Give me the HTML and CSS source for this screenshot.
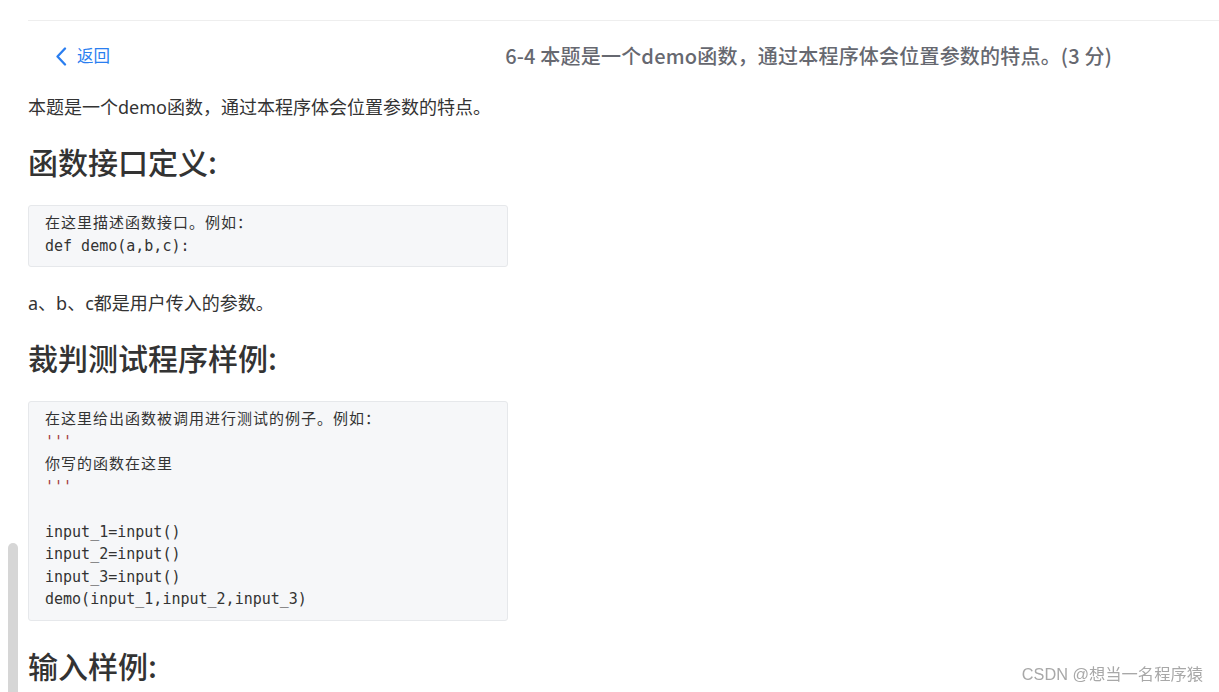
FILE: index.html
```html
<!DOCTYPE html>
<html lang="zh-CN">
<head>
<meta charset="utf-8">
<title>6-4 本题是一个demo函数</title>
<link rel="stylesheet" href="styles.css">
</head>
<body>
<div class="page">
  <div class="content">
    <header class="header">
      <a class="back" href="#">
        <svg class="chev" width="12" height="19" viewBox="0 0 12 19"><polyline points="10,1.5 2.5,9.5 10,17.5" fill="none" stroke="currentColor" stroke-width="2.3" stroke-linecap="round" stroke-linejoin="round"/></svg>
        <span>返回</span>
      </a>
      <h1 class="title">6-4 本题是一个demo函数，通过本程序体会位置参数的特点。(3 分)</h1>
    </header>
    <p class="text first">本题是一个demo函数，通过本程序体会位置参数的特点。</p>
    <h2 class="section">函数接口定义:</h2>
    <pre class="code"><span class="cjk">在这里描述函数接口。例如：</span>
def demo(a,b,c):</pre>
    <p class="text after-code">a、b、c都是用户传入的参数。</p>
    <h2 class="section">裁判测试程序样例:</h2>
    <pre class="code"><span class="cjk">在这里给出函数被调用进行测试的例子。例如：</span>
<span class="str">'''</span>
<span class="cjk">你写的函数在这里</span>
<span class="str">'''</span>

input_1=input()
input_2=input()
input_3=input()
demo(input_1,input_2,input_3)</pre>
    <h2 class="section last">输入样例:</h2>
  </div>
</div>
<div class="scroll-thumb"></div>
<div class="watermark">CSDN @想当一名程序猿</div>
</body>
</html>
```
FILE: styles.css
```css
html, body {
  margin: 0;
  padding: 0;
  background: #fff;
  overflow: hidden;
}
body {
  font-family: "Noto Sans", "Noto Sans CJK SC", sans-serif;
  color: #333;
}
.page {
  padding: 20px 0 0 28px;
}
.content {
  border-top: 1px solid #eeeeee;
}
.header {
  display: flex;
  align-items: center;
  height: 46px;
  margin-top: 12px;
  padding-left: 27px;
}
.back {
  display: flex;
  align-items: center;
  gap: 10px;
  color: #2a7ef0;
  text-decoration: none;
  font-size: 16.5px;
  line-height: 22px;
}
.chev {
  display: block;
}
.title {
  margin: 0 107px 0 auto;
  font-family: "Noto Sans CJK SC", sans-serif;
  font-size: 20px;
  font-weight: 500;
  letter-spacing: 0.2px;
  color: #666870;
  line-height: 28px;
}
.text {
  margin: 0;
  font-size: 18px;
  line-height: 28px;
  color: #333;
}
.text.first {
  margin-top: 14px;
}
.text.after-code {
  margin-top: 22px;
}
.section {
  margin: 19px 0 23px;
  font-family: "Noto Sans CJK SC", sans-serif;
  font-size: 30px;
  line-height: 42px;
  font-weight: 500;
  color: #333;
}
.code + .section {
  margin-top: 23px;
}
.code {
  margin: 0;
  width: 446px;
  padding: 6px 16px 9px;
  background: #f6f7f9;
  border: 1px solid #e6e8eb;
  border-radius: 3px;
  font-family: "DejaVu Sans Mono", "Noto Sans CJK SC", monospace;
  font-size: 15px;
  line-height: 22.5px;
  color: #333;
  white-space: pre;
}
.cjk {
  letter-spacing: 1px;
}
.str {
  color: #a33a3a;
}
.scroll-thumb {
  position: fixed;
  left: 8px;
  top: 543px;
  bottom: 0;
  width: 10px;
  background: #d6d6d6;
  border-radius: 5px 5px 0 0;
}
.watermark {
  position: fixed;
  right: 16px;
  bottom: 6px;
  font-family: "Liberation Sans", "Noto Sans CJK SC", sans-serif;
  font-size: 16.3px;
  line-height: 24px;
  color: #a8a8a8;
  text-shadow: 0 0 2px #fff;
}
```
